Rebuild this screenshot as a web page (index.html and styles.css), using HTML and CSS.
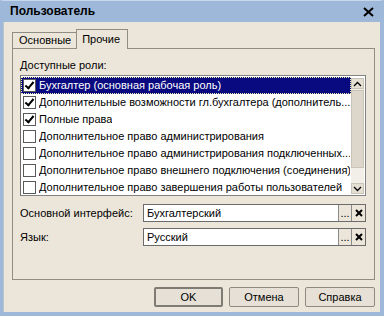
FILE: index.html
```html
<!DOCTYPE html>
<html lang="ru">
<head>
    <meta charset="UTF-8">
    <title>Пользователь</title>
    <link rel="stylesheet" href="styles.css">
</head>
<body>
    <div class="window">
        <!-- Title bar -->
        <div class="title-bar">
            <span class="title">Пользователь</span>
            <span class="close">
                <svg width="11" height="10" viewBox="0 0 11 10"><path d="M1 1 L10 9 M10 1 L1 9" stroke="#000" stroke-width="2"/></svg>
            </span>
        </div>

        <div class="content">
            <!-- Tabs -->
            <div class="tabs">
                <div class="tab">Основные</div>
                <div class="tab active">Прочие</div>
            </div>

            <div class="tab-panel">
                <div class="caption">Доступные роли:</div>

                <div class="list-box">
                    <div class="rows">
                        <div class="row selected"><span class="check on"></span><span class="row-text">Бухгалтер (основная рабочая роль)</span></div>
                        <div class="row"><span class="check on"></span><span class="row-text">Дополнительные возможности гл.бухгалтера (дополнитель...</span></div>
                        <div class="row"><span class="check on"></span><span class="row-text">Полные права</span></div>
                        <div class="row"><span class="check"></span><span class="row-text">Дополнительное право администрирования</span></div>
                        <div class="row"><span class="check"></span><span class="row-text">Дополнительное право администрирования подключенных...</span></div>
                        <div class="row"><span class="check"></span><span class="row-text">Дополнительное право внешнего подключения (соединения)</span></div>
                        <div class="row"><span class="check"></span><span class="row-text">Дополнительное право завершения работы пользователей</span></div>
                    </div>
                    <div class="scrollbar">
                        <div class="sb-btn">
                            <svg width="9" height="6" viewBox="0 0 9 6"><path d="M1 5 L4.5 1.5 L8 5" fill="none" stroke="#000" stroke-width="1.3"/></svg>
                        </div>
                        <div class="sb-thumb"></div>
                        <div class="sb-track"></div>
                        <div class="sb-btn">
                            <svg width="9" height="6" viewBox="0 0 9 6"><path d="M1 1 L4.5 4.5 L8 1" fill="none" stroke="#000" stroke-width="1.3"/></svg>
                        </div>
                    </div>
                </div>

                <div class="field-row">
                    <span class="field-label">Основной интерфейс:</span>
                    <div class="field">
                        <span class="field-input">Бухгалтерский</span>
                        <span class="field-btn dots">...</span>
                        <span class="field-btn clear">
                            <svg width="8" height="8" viewBox="0 0 8 8"><path d="M1 1 L7 7 M7 1 L1 7" stroke="#000" stroke-width="2"/></svg>
                        </span>
                    </div>
                </div>
                <div class="field-row">
                    <span class="field-label">Язык:</span>
                    <div class="field">
                        <span class="field-input">Русский</span>
                        <span class="field-btn dots">...</span>
                        <span class="field-btn clear">
                            <svg width="8" height="8" viewBox="0 0 8 8"><path d="M1 1 L7 7 M7 1 L1 7" stroke="#000" stroke-width="2"/></svg>
                        </span>
                    </div>
                </div>
            </div>

            <!-- Dialog buttons -->
            <div class="buttons">
                <button class="btn default">OK</button>
                <button class="btn">Отмена</button>
                <button class="btn">Справка</button>
            </div>
        </div>
    </div>
</body>
</html>
```

FILE: styles.css
```css
* {
    margin: 0;
    padding: 0;
    box-sizing: border-box;
    font-family: "Liberation Sans", Arial, sans-serif;
}

:root {
    --frame: #9db8d8;
    --face: #ece6da;
    --edge: #8f8d84;
    --navy: #0a0a80;
}

body {
    width: 384px;
    height: 316px;
    overflow: hidden;
    background-color: var(--frame);
    font-size: 11px;
    color: #000;
}

/* Window frame */
.window {
    width: 384px;
    height: 316px;
    display: flex;
    flex-direction: column;
    border-top: 1px solid #c8d7ea;
    border-left: 3px solid var(--frame);
    border-right: 4px solid var(--frame);
    border-bottom: 4px solid var(--frame);
}

.title-bar {
    height: 21px;
    display: flex;
    align-items: center;
    justify-content: space-between;
    padding: 0 6px 1px 7px;
}

.title {
    font-weight: bold;
    font-size: 12px;
}

.close {
    display: flex;
    margin-top: 2px;
}

.content {
    flex: 1;
    background-color: var(--face);
    border-left: 1px solid #b9c4cf;
    padding: 7px 5px 0 8px;
    display: flex;
    flex-direction: column;
}

/* Tabs */
.tabs {
    display: flex;
    align-items: flex-end;
    height: 19px;
    position: relative;
    z-index: 1;
}

.tab {
    height: 16px;
    padding: 0 5px 0 6px;
    border: 1px solid var(--edge);
    border-bottom: none;
    border-right: none;
    line-height: 15px;
    background-color: var(--face);
}

.tab.active {
    height: 20px;
    margin-bottom: -1px;
    padding: 1px 7px 0 5px;
    border-right: 1px solid var(--edge);
    line-height: 17px;
}

.tab-panel {
    height: 232px;
    border: 1px solid var(--edge);
    padding: 9px 8px 0 7px;
}

.caption {
    height: 17px;
    line-height: 14px;
}

/* Role list */
.list-box {
    height: 121px;
    display: flex;
    background-color: #fff;
    border: 1px solid #828282;
    border-left-color: #6c6c6c;
    padding: 1px 0 1px 0;
}

.rows {
    flex: 1;
    min-width: 0;
    overflow: hidden;
}

.row {
    height: 17px;
    display: flex;
    align-items: center;
    gap: 3px;
    padding-left: 1px;
    white-space: nowrap;
    border: 1px solid transparent;
}

.row.selected {
    background-color: var(--navy);
    color: #fff;
    border: 1px dotted #f0f0b0;
}

.check {
    width: 13px;
    height: 13px;
    flex: none;
    background-color: #fff;
    border: 1px solid #5a5a5a;
    position: relative;
}

.check.on::after {
    content: "";
    position: absolute;
    left: 3px;
    top: 0px;
    width: 3px;
    height: 7px;
    border-right: 2px solid #000;
    border-bottom: 2px solid #000;
    transform: rotate(40deg);
}

.row-text {
    line-height: 15px;
    overflow: hidden;
}

.scrollbar {
    width: 13px;
    flex: none;
    margin: 1px 1px 0 0;
    display: flex;
    flex-direction: column;
    background-color: #f2efe8;
}

.sb-btn {
    height: 11px;
    display: flex;
    align-items: center;
    justify-content: center;
    background-color: #e4ded3;
    border: 1px solid #c9c4b8;
}

.sb-thumb {
    height: 78px;
    margin-top: 1px;
    background-color: #ddd7cb;
    border: 1px solid #c9c4b8;
}

.sb-track {
    flex: 1;
}

/* Fields */
.field-row {
    display: flex;
    align-items: center;
    height: 18px;
    margin-top: 8px;
}

.field-row + .field-row {
    margin-top: 6px;
}

.field-label {
    width: 123px;
}

.field {
    flex: 1;
    display: flex;
    height: 18px;
    border: 1px solid #6b6b6b;
    background-color: #fff;
}

.field-input {
    flex: 1;
    padding-left: 3px;
    line-height: 16px;
}

.field-btn {
    width: 13px;
    display: flex;
    align-items: center;
    justify-content: center;
    background-color: var(--face);
    border-left: 1px solid #8a8a8a;
}

.field-btn.dots {
    align-items: flex-end;
    line-height: 12px;
    padding-bottom: 2px;
    font-size: 11px;
}

.field-btn.clear {
    width: 14px;
}

/* Dialog buttons */
.buttons {
    display: flex;
    justify-content: flex-end;
    gap: 6px;
    margin-top: 7px;
}

.btn {
    width: 70px;
    height: 20px;
    font-size: 11px;
    background-color: #e6e0d6;
    border: 1px solid #8d8a82;
    border-radius: 2px;
}

.btn.default {
    width: 69px;
    border: 2px solid #7d7b74;
}
```
